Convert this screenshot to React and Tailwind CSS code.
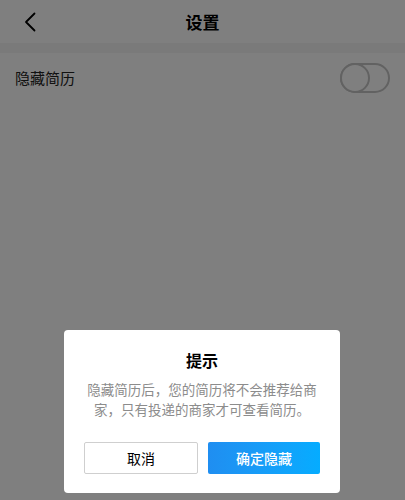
import React from 'react';

const font = { fontFamily: '"Noto Sans CJK SC", "Noto Sans", sans-serif' };

const BackIcon = () => (
  <svg width="14" height="20" viewBox="0 0 14 20" fill="none">
    <path d="M10.5 1.5L2 10l8.5 8.5" stroke="#000" strokeWidth="1.8" strokeLinecap="round" strokeLinejoin="round" />
  </svg>
);

const Toggle = () => (
  <div className="w-[50px] h-[30px] rounded-full border-2 border-[#c4c4c4] relative">
    <div className="absolute -left-[2px] -top-[2px] w-[30px] h-[30px] rounded-full border-2 border-[#c4c4c4] bg-white" />
  </div>
);

export default function App() {
  return (
    <div className="relative w-[405px] h-[500px] bg-white overflow-hidden" style={font}>
      <header className="h-[43px] flex items-center relative bg-white">
        <div className="pl-[24px] flex items-center">
          <BackIcon />
        </div>
        <h1 className="absolute inset-x-0 text-center text-[17px] font-bold text-black pointer-events-none">设置</h1>
      </header>
      <div className="h-[10px] bg-[#f4f4f4]" />
      <div className="h-[50px] flex items-center justify-between pl-[15px] pr-[15px]">
        <span className="text-[15px] text-[#222]">隐藏简历</span>
        <Toggle />
      </div>

      {/* dim overlay */}
      <div className="absolute inset-0 bg-black/50" />

      <div className="absolute left-[64px] top-[330px] w-[276px] bg-white rounded-[4px] pt-[18px] pb-[19px] px-[20px]">
        <h2 className="text-center text-[16px] leading-[24px] font-bold text-black">提示</h2>
        <p className="mt-[7px] text-center text-[13.5px] leading-[20px] text-[#8c8c8c]">
          隐藏简历后，您的简历将不会推荐给商家，只有投递的商家才可查看简历。
        </p>
        <div className="mt-[23px] flex gap-[10px]">
          <button className="flex-1 h-[32px] border border-[#cfcfcf] rounded-[2px] text-[14px] text-black bg-white">取消</button>
          <button className="flex-1 h-[32px] rounded-[2px] text-[14px] text-white font-medium bg-gradient-to-r from-[#1f8ef1] to-[#05acff]">确定隐藏</button>
        </div>
      </div>
    </div>
  );
}
